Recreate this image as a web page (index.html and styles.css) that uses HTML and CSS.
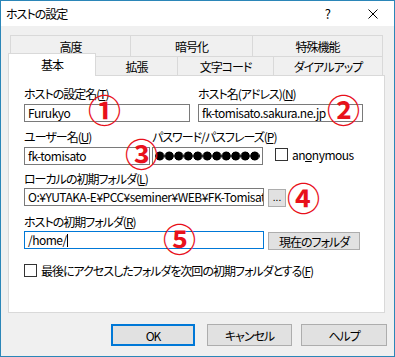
FILE: index.html
```html
<!DOCTYPE html>
<html>
<head>
    <meta charset="utf-8">
    <link rel="stylesheet" href="styles.css">
</head>
<body>
    <div class="window">
        <div class="titlebar">
            <span class="title">ホストの設定</span>
            <span class="help-mark">?</span>
            <svg class="close" width="10" height="10" viewBox="0 0 10 10">
                <path d="M0.5 0.5 L9.5 9.5 M9.5 0.5 L0.5 9.5" stroke="#000" stroke-width="1" fill="none"/>
            </svg>
        </div>
        <div class="dialog">
            <div class="tab-row back">
                <div class="tab t-adv">高度</div>
                <div class="tab t-enc">暗号化</div>
                <div class="tab t-spec">特殊機能</div>
            </div>
            <div class="tab-row front">
                <div class="tab active">基本</div>
                <div class="tab t-ext">拡張</div>
                <div class="tab t-code">文字コード</div>
                <div class="tab t-dial">ダイアルアップ</div>
            </div>
            <div class="panel">
                <div class="row row-a">
                    <div class="field f-name">
                        <label>ホストの設定名(<u>T</u>)</label>
                        <div class="input">Furukyo</div>
                    </div>
                    <div class="field f-host">
                        <label>ホスト名(アドレス)(<u>N</u>)</label>
                        <div class="input">fk-tomisato.sakura.ne.jp</div>
                    </div>
                </div>
                <div class="row row-b">
                    <div class="field f-user">
                        <label>ユーザー名(<u>U</u>)</label>
                        <div class="input">fk-tomisato</div>
                    </div>
                    <div class="field f-pass">
                        <label>パスワード/パスフレーズ(<u>P</u>)</label>
                        <div class="input"><span class="dots"></span></div>
                    </div>
                    <div class="check anon">
                        <span class="box"></span>
                        <span class="latin">an<u>o</u>nymous</span>
                    </div>
                </div>
                <div class="row-c">
                    <label>ローカルの初期フォルダ(<u>L</u>)</label>
                    <div class="line">
                        <div class="input wide">O:¥YUTAKA-E¥PCC¥seminer¥WEB¥FK-Tomisato</div>
                        <div class="btn browse">...</div>
                    </div>
                </div>
                <div class="row-d">
                    <label>ホストの初期フォルダ(<u>R</u>)</label>
                    <div class="line">
                        <div class="input wide focused">/home/<span class="caret"></span></div>
                        <div class="btn current">現在のフォルダ</div>
                    </div>
                </div>
                <div class="check last-folder">
                    <span class="box"></span>
                    <span>最後にアクセスしたフォルダを次回の初期フォルダとする(<u>F</u>)</span>
                </div>

                <span class="mark m1">①</span>
                <span class="mark m2">②</span>
                <span class="mark m3">③</span>
                <span class="mark m4">④</span>
                <span class="mark m5">⑤</span>
            </div>
            <div class="buttons">
                <div class="btn ok">OK</div>
                <div class="btn cancel">キャンセル</div>
                <div class="btn help">ヘルプ</div>
            </div>
        </div>
    </div>
</body>
</html>
```

FILE: styles.css
```css
body {
    margin: 0;
}
.window {
    width: 395px;
    height: 357px;
    box-sizing: border-box;
    border: 1px solid #2b86b8;
    background-color: #f0f0f0;
    font-family: "Noto Sans CJK JP", sans-serif;
    font-size: 12px;
    font-feature-settings: "palt";
    letter-spacing: -1px;
    color: #000;
}
.titlebar {
    height: 25px;
    background-color: #fff;
    display: flex;
    align-items: center;
    padding-left: 5px;
}
.help-mark {
    margin-left: auto;
    font-size: 13px;
}
.close {
    margin-left: 38px;
    margin-right: 16px;
}
.dialog {
    padding: 9px 7px 0 7px;
}

/* tabs */
.tab-row {
    display: flex;
    align-items: flex-start;
}
.tab-row.back {
    margin-left: 2px;
    height: 21px;
}
.tab-row.front {
    height: 19px;
}
.tab {
    box-sizing: border-box;
    border: 1px solid #d9d9d9;
    border-bottom: none;
    margin-right: -1px;
    display: flex;
    align-items: center;
    justify-content: center;
    background-color: #f0f0f0;
}
.back .tab {
    height: 21px;
}
.front .tab {
    height: 19px;
}
.t-adv { width: 121px; }
.t-enc { width: 123px; }
.t-spec { width: 131px; }
.t-ext { width: 83px; }
.t-code { width: 97px; }
.t-dial { width: 110px; }
.front .tab.active {
    width: 88px;
    height: 23px;
    margin-top: -3px;
    padding-bottom: 2px;
    background-color: #fff;
    position: relative;
    z-index: 1;
}

/* panel */
.panel {
    width: 377px;
    height: 238px;
    box-sizing: border-box;
    border: 1px solid #d9d9d9;
    background-color: #fff;
    position: relative;
    padding: 11px 0 0 15px;
}
label {
    display: block;
    height: 14px;
    line-height: 14px;
    white-space: nowrap;
}
.input {
    box-sizing: border-box;
    height: 18px;
    border: 1px solid #7a7a7a;
    padding: 0 3px;
    line-height: 16px;
    white-space: nowrap;
    overflow: hidden;
    background-color: #fff;
    letter-spacing: -0.5px;
}
.latin {
    letter-spacing: -0.5px;
}
.input.focused {
    border-color: #0078d7;
}
.row {
    display: flex;
}
.row label {
    margin-bottom: 3px;
}
.f-name { width: 166px; }
.f-host { width: 165px; margin-left: 8px; }
.row-b {
    margin-top: 8px;
    align-items: flex-end;
}
.f-user { width: 126px; }
.f-pass { width: 111px; margin-left: 2px; }
.f-pass .input {
    padding: 0 2px;
    display: flex;
    align-items: center;
}
.dots {
    display: block;
    width: 105px;
    height: 10px;
    background: radial-gradient(circle, #000 4.2px, transparent 4.8px) 0 0 / 9.5px 10px repeat-x;
}
.check {
    display: flex;
    align-items: center;
    white-space: nowrap;
}
.check .box {
    width: 13px;
    height: 13px;
    box-sizing: border-box;
    border: 1px solid #333;
    background-color: #fff;
    margin-right: 4px;
}
.anon {
    margin-left: 12px;
    margin-bottom: 2px;
}
.row-c {
    margin-top: 7px;
}
.row-d {
    margin-top: 8px;
}
.row-c label, .row-d label {
    margin-bottom: 2px;
}
.line {
    display: flex;
    align-items: flex-start;
}
.input.wide {
    width: 240px;
}
.caret {
    display: inline-block;
    width: 1px;
    height: 13px;
    background-color: #000;
    vertical-align: -2px;
}
.btn {
    box-sizing: border-box;
    border: 1px solid #adadad;
    background-color: #e1e1e1;
    display: flex;
    align-items: center;
    justify-content: center;
    white-space: nowrap;
}
.browse {
    width: 18px;
    height: 18px;
    margin: 1px 0 0 4px;
    font-size: 10px;
    line-height: 1;
    letter-spacing: 0;
    padding-bottom: 3px;
}
.current {
    width: 92px;
    height: 18px;
    margin: 1px 0 0 4px;
}
.last-folder {
    margin-top: 13px;
    height: 14px;
}

/* red numbered markers laid over the form */
.mark {
    position: absolute;
    width: 33px;
    height: 33px;
    line-height: 33px;
    text-align: center;
    font-size: 33px;
    font-weight: 700;
    letter-spacing: 0;
    color: #e8111b;
}
.m1 { left: 79px; top: 17px; }
.m2 { left: 318px; top: 17px; }
.m3 { left: 116px; top: 61px; }
.m4 { left: 278px; top: 105px; }
.m5 { left: 154px; top: 146px; }

/* bottom buttons */
.buttons {
    display: flex;
    justify-content: flex-end;
    margin-top: 11px;
}
.buttons .btn {
    height: 22px;
}
.ok {
    width: 84px;
    margin-right: 12px;
    border: 2px solid #0078d7;
}
.cancel {
    width: 85px;
    margin-right: 9px;
}
.help {
    width: 86px;
}
```
